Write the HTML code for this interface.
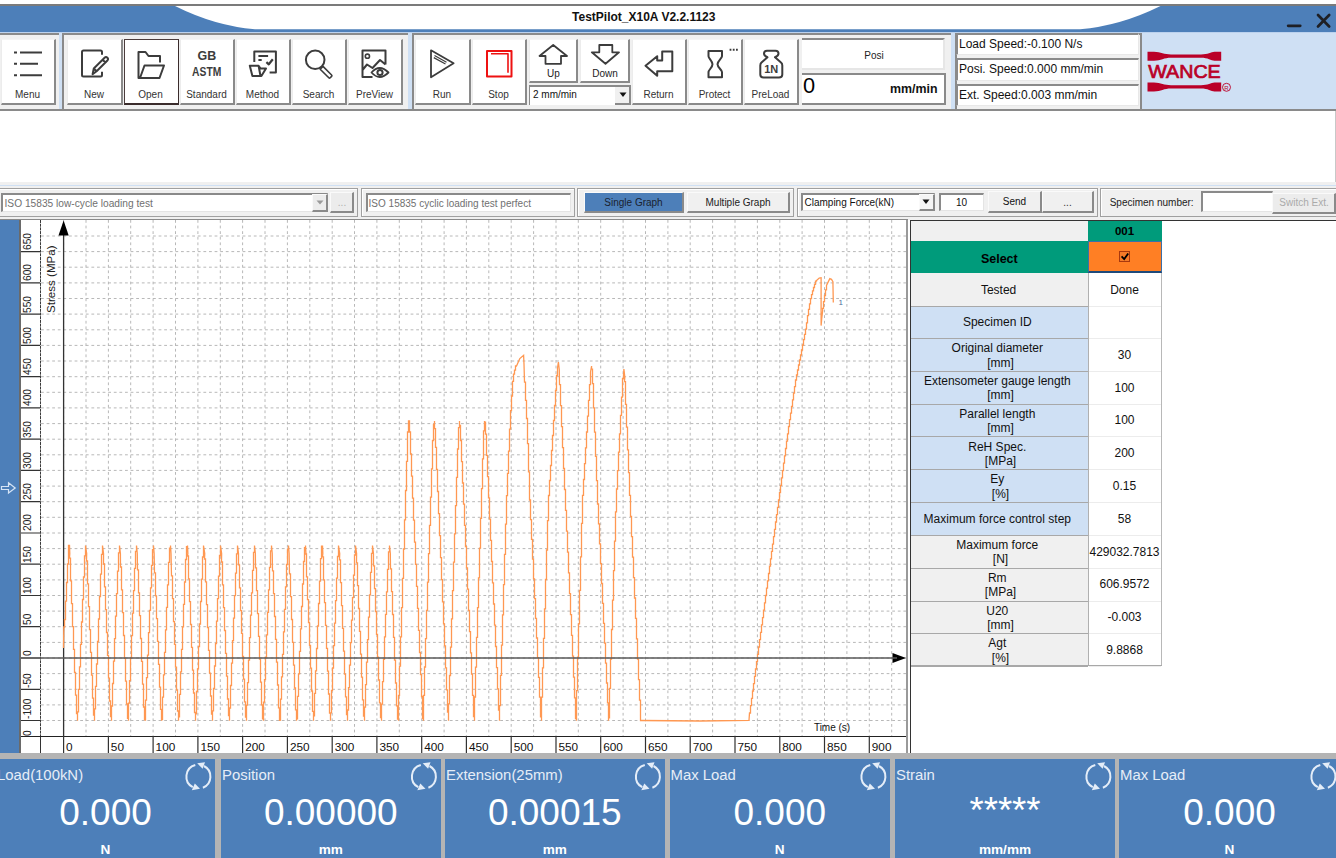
<!DOCTYPE html><html><head><meta charset="utf-8"><style>
html,body{margin:0;padding:0;}
body{width:1336px;height:858px;overflow:hidden;position:relative;background:#fff;font-family:"Liberation Sans", sans-serif;}
.t{position:absolute;white-space:nowrap;font-family:"Liberation Sans", sans-serif;}
.b{position:absolute;box-sizing:border-box;}
svg{position:absolute;left:0;top:0;}
</style></head><body>
<div class="b" style="left:0px;top:4px;width:1336px;height:2px;background:#7b7b7b;"></div>
<div class="b" style="left:0px;top:6px;width:1336px;height:26px;background:#4D7FB9;"></div>
<svg width="1336" height="40" style="left:0;top:0"><path d="M175,6 Q215,26 255,29.2 L1080,29.2 Q1120,26 1160.5,6 Z" fill="#fff"/></svg>
<div class="b" style="left:0px;top:32px;width:1336px;height:1px;background:#BcD2EE;"></div>
<div class="t" style="left:493.75px;width:300px;text-align:center;top:11.34px;font-size:12px;line-height:12px;font-weight:bold;color:#111;">TestPilot_X10A V2.2.1123</div>
<svg width="1336" height="40"><path d="M1288.2,25.8 H1300.2" stroke="#1e1f24" stroke-width="2.8" stroke-linecap="round"/></svg>
<svg width="1336" height="40" style="left:0;top:0"><path d="M1318,15 L1329.2,26.5 M1329.2,15 L1318,26.5" stroke="#1e1f24" stroke-width="2.7" stroke-linecap="round"/></svg>
<div class="b" style="left:0px;top:33px;width:1336px;height:76px;background:#CFE0F4;"></div>
<div class="b" style="left:0px;top:33px;width:59px;height:76px;background:#F0F0F0;border-top:2px solid #8A8A8A;"></div>
<div class="b" style="left:62px;top:33px;width:346px;height:76px;background:#F0F0F0;border-top:2px solid #8A8A8A;border-left:2px solid #8A8A8A;"></div>
<div class="b" style="left:412px;top:33px;width:539px;height:76px;background:#F0F0F0;border-top:2px solid #8A8A8A;border-left:2px solid #8A8A8A;"></div>
<div class="b" style="left:955px;top:33px;width:187px;height:76px;background:#F0F0F0;border-top:2px solid #8A8A8A;border-left:2px solid #8A8A8A;"></div>
<div class="b" style="left:0px;top:109px;width:1336px;height:2px;background:#8A8A8A;"></div>
<div class="b" style="left:1px;top:39px;width:55px;height:66px;background:#fff;border-right:2px solid #8A8A8A;border-bottom:2px solid #8A8A8A;border-left:1px solid #ececec;border-top:1px solid #f4f4f4;"></div>
<div class="t" style="left:-12.50px;width:80px;text-align:center;top:89.53px;font-size:10px;line-height:10px;font-weight:normal;color:#333;">Menu</div>
<div class="b" style="left:67px;top:39px;width:56px;height:66px;background:#fff;border-right:2px solid #8A8A8A;border-bottom:2px solid #8A8A8A;border-left:1px solid #ececec;border-top:1px solid #f4f4f4;"></div>
<div class="t" style="left:54.00px;width:80px;text-align:center;top:89.53px;font-size:10px;line-height:10px;font-weight:normal;color:#333;">New</div>
<div class="b" style="left:124px;top:39px;width:55px;height:66px;background:#fff;border:1px solid #4a3c3c;border-bottom:2px solid #3a2c2c;border-right:1px solid #3a2c2c;"></div>
<div class="t" style="left:110.50px;width:80px;text-align:center;top:89.53px;font-size:10px;line-height:10px;font-weight:normal;color:#333;">Open</div>
<div class="b" style="left:180px;top:39px;width:55px;height:66px;background:#fff;border-right:2px solid #8A8A8A;border-bottom:2px solid #8A8A8A;border-left:1px solid #ececec;border-top:1px solid #f4f4f4;"></div>
<div class="t" style="left:166.50px;width:80px;text-align:center;top:89.53px;font-size:10px;line-height:10px;font-weight:normal;color:#333;">Standard</div>
<div class="b" style="left:236px;top:39px;width:55px;height:66px;background:#fff;border-right:2px solid #8A8A8A;border-bottom:2px solid #8A8A8A;border-left:1px solid #ececec;border-top:1px solid #f4f4f4;"></div>
<div class="t" style="left:222.50px;width:80px;text-align:center;top:89.53px;font-size:10px;line-height:10px;font-weight:normal;color:#333;">Method</div>
<div class="b" style="left:292px;top:39px;width:55px;height:66px;background:#fff;border-right:2px solid #8A8A8A;border-bottom:2px solid #8A8A8A;border-left:1px solid #ececec;border-top:1px solid #f4f4f4;"></div>
<div class="t" style="left:278.50px;width:80px;text-align:center;top:89.53px;font-size:10px;line-height:10px;font-weight:normal;color:#333;">Search</div>
<div class="b" style="left:348px;top:39px;width:55px;height:66px;background:#fff;border-right:2px solid #8A8A8A;border-bottom:2px solid #8A8A8A;border-left:1px solid #ececec;border-top:1px solid #f4f4f4;"></div>
<div class="t" style="left:334.50px;width:80px;text-align:center;top:89.53px;font-size:10px;line-height:10px;font-weight:normal;color:#333;">PreView</div>
<div class="b" style="left:415px;top:39px;width:56px;height:66px;background:#fff;border-right:2px solid #8A8A8A;border-bottom:2px solid #8A8A8A;border-left:1px solid #ececec;border-top:1px solid #f4f4f4;"></div>
<div class="t" style="left:402.00px;width:80px;text-align:center;top:89.53px;font-size:10px;line-height:10px;font-weight:normal;color:#333;">Run</div>
<div class="b" style="left:472px;top:39px;width:55px;height:66px;background:#fff;border-right:2px solid #8A8A8A;border-bottom:2px solid #8A8A8A;border-left:1px solid #ececec;border-top:1px solid #f4f4f4;"></div>
<div class="t" style="left:458.50px;width:80px;text-align:center;top:89.53px;font-size:10px;line-height:10px;font-weight:normal;color:#333;">Stop</div>
<div class="b" style="left:632px;top:39px;width:55px;height:66px;background:#fff;border-right:2px solid #8A8A8A;border-bottom:2px solid #8A8A8A;border-left:1px solid #ececec;border-top:1px solid #f4f4f4;"></div>
<div class="t" style="left:618.50px;width:80px;text-align:center;top:89.53px;font-size:10px;line-height:10px;font-weight:normal;color:#333;">Return</div>
<div class="b" style="left:688px;top:39px;width:55px;height:66px;background:#fff;border-right:2px solid #8A8A8A;border-bottom:2px solid #8A8A8A;border-left:1px solid #ececec;border-top:1px solid #f4f4f4;"></div>
<div class="t" style="left:674.50px;width:80px;text-align:center;top:89.53px;font-size:10px;line-height:10px;font-weight:normal;color:#333;">Protect</div>
<div class="b" style="left:744px;top:39px;width:55px;height:66px;background:#fff;border-right:2px solid #8A8A8A;border-bottom:2px solid #8A8A8A;border-left:1px solid #ececec;border-top:1px solid #f4f4f4;"></div>
<div class="t" style="left:730.50px;width:80px;text-align:center;top:89.53px;font-size:10px;line-height:10px;font-weight:normal;color:#333;">PreLoad</div>
<div class="b" style="left:529px;top:39px;width:49px;height:44px;background:#fff;border-right:2px solid #8A8A8A;border-bottom:2px solid #8A8A8A;border-left:1px solid #ececec;border-top:1px solid #f4f4f4;"></div>
<div class="b" style="left:580px;top:39px;width:50px;height:44px;background:#fff;border-right:2px solid #8A8A8A;border-bottom:2px solid #8A8A8A;border-left:1px solid #ececec;border-top:1px solid #f4f4f4;"></div>
<div class="t" style="left:523.50px;width:60px;text-align:center;top:69.13px;font-size:10px;line-height:10px;font-weight:normal;color:#222;">Up</div>
<div class="t" style="left:575.00px;width:60px;text-align:center;top:69.13px;font-size:10px;line-height:10px;font-weight:normal;color:#222;">Down</div>
<div class="b" style="left:529px;top:85px;width:102px;height:20px;background:#fff;border-top:2px solid #8A8A8A;border-left:1px solid #8A8A8A;"></div>
<div class="b" style="left:615px;top:87px;width:16px;height:18px;background:#F0F0F0;border-right:2px solid #8A8A8A;border-bottom:2px solid #8A8A8A;"></div>
<svg width="1336" height="120"><path d="M619.5,92.5 L626.5,92.5 L623,97 Z" fill="#111"/></svg>
<div class="t" style="left:533.00px;top:90.13px;font-size:10px;line-height:10px;font-weight:normal;color:#111;">2 mm/min</div>
<div class="b" style="left:802px;top:38px;width:143px;height:32px;background:#fff;border-top:2px solid #8A8A8A;border-right:2px solid #e6e6e6;border-bottom:2px solid #e6e6e6;"></div>
<div class="t" style="left:834.00px;width:80px;text-align:center;top:50.53px;font-size:10px;line-height:10px;font-weight:normal;color:#222;">Posi</div>
<div class="b" style="left:802px;top:73px;width:144px;height:32px;background:#fff;border-top:2px solid #8A8A8A;border-right:2px solid #8A8A8A;border-bottom:2px solid #8A8A8A;"></div>
<div class="t" style="left:803.00px;top:74.95px;font-size:21.8px;line-height:21.8px;font-weight:normal;color:#000;">0</div>
<div class="t" style="left:837.50px;width:100px;text-align:right;top:83.30px;font-size:12.4px;line-height:12.4px;font-weight:bold;color:#111;">mm/min</div>
<div class="b" style="left:956px;top:33px;width:183px;height:22px;background:#fff;border-top:2px solid #8A8A8A;border-left:2px solid #8A8A8A;border-right:1px solid #e8e8e8;border-bottom:1px solid #e8e8e8;"></div>
<div class="t" style="left:959.00px;top:38.34px;font-size:12px;line-height:12px;font-weight:normal;color:#111;">Load Speed:-0.100 N/s</div>
<div class="b" style="left:956px;top:58px;width:183px;height:23px;background:#fff;border-top:2px solid #8A8A8A;border-left:2px solid #8A8A8A;border-right:1px solid #e8e8e8;border-bottom:1px solid #e8e8e8;"></div>
<div class="t" style="left:959.00px;top:63.34px;font-size:12px;line-height:12px;font-weight:normal;color:#111;">Posi. Speed:0.000 mm/min</div>
<div class="b" style="left:956px;top:84px;width:183px;height:22px;background:#fff;border-top:2px solid #8A8A8A;border-left:2px solid #8A8A8A;border-right:1px solid #e8e8e8;border-bottom:1px solid #e8e8e8;"></div>
<div class="t" style="left:959.00px;top:89.34px;font-size:12px;line-height:12px;font-weight:normal;color:#111;">Ext. Speed:0.003 mm/min</div>
<div class="b" style="left:1140px;top:33px;width:2px;height:76px;background:#8A8A8A;"></div>
<svg width="1336" height="120" style="left:0;top:0"><g fill="none" stroke="#3c3c3c" stroke-width="2" stroke-linecap="butt" stroke-linejoin="round"><path d="M14,52.5 H17 M20,52.5 H42 M14,63.8 H17 M20,63.8 H38 M14,75.2 H17 M20,75.2 H42"/><path d="M102,54.8 V52 Q102,50.5 100.5,50.5 H83.5 Q82,50.5 82,52 V75 Q82,76.5 83.5,76.5 H100.5 Q102,76.5 102,75 V71.8"/><path d="M92.6,74.2 L93.8,68.5 L104.6,57.7 Q106,56.3 107.4,57.7 Q108.8,59.1 107.4,60.5 L96.6,71.3 Z M102.6,59.7 L105.4,62.5 M93.8,68.5 L96.6,71.3"/><path d="M160,62.5 V56 H148.5 L145.5,52 H138.5 V78 H159.5 L164,65.5 H144.5 L140,78"/><path d="M254.3,62 V51.5 H275.9 V72.4 H269.6 M258.4,56 H268.1 M258.4,60.1 H261.7"/><path d="M266.4,62.2 L268.8,64.3 L272.8,59.3" stroke-width="2.2"/><path d="M249.8,65.8 H258.6 L260.4,68.4 H266 L261.4,76.1 H252.4 Z M258.6,65.8 L260.5,76" stroke-width="2"/><circle cx="315.2" cy="59.8" r="9.3"/><path d="M323,66.4 L331.6,75 Q332.3,75.7 331.6,76.4 L330.2,77.8 Q329.5,78.5 328.8,77.8 L320.2,69.2 Z" stroke-width="1.6"/><path d="M385.5,64.5 V50.5 H362.5 V77 H372.5 M362.5,70 L367,64.5 L372.5,68 L380,60 L385.5,64.5"/><circle cx="367.4" cy="56.2" r="2.1" stroke-width="1.6"/><path d="M371.5,72.5 Q379.5,63.5 388.5,72.5 Q379.5,81.5 371.5,72.5 Z" stroke-width="1.8"/><circle cx="380" cy="72.5" r="2.6" stroke-width="2"/><path d="M431,50.3 L453.6,63.3 L431,77.3 Z" stroke-width="1.8"/><path d="M434.5,55.6 L446.5,62.3 M433.8,57.6 L445.5,64" stroke-width="1.2"/><rect x="487" y="51" width="24.5" height="25.5" stroke="#ee1111" stroke-width="2"/><path d="M491,53.8 H508 V72.8" stroke="#ee1111" stroke-width="1.6"/><path d="M553.2,45 L539.5,56 H545.5 V63.8 H561 V56 H567 Z" stroke-width="1.8"/><path d="M599.3,45 H612.3 V52.3 H619 L605.5,63.8 L591.8,52.3 H599.3 Z" stroke-width="1.8"/><path d="M645.5,65.7 L657.2,56.2 V60.6 H662.2 V51.6 H672.3 V71.3 H657.2 V75.7 Z" stroke-width="2"/><path d="M708.5,51 H722 V56.3 C722,58.3 717.5,61 717.5,64.2 C717.5,67.4 722,70 722,72 V77.2 H708.5 V72 C708.5,70 712.5,67.4 712.5,64.2 C712.5,61 708.5,58.3 708.5,56.3 Z" stroke-width="2"/><path d="M729.6,49.8 H731.4 M732.8,49.8 H734.6 M736,49.8 H737.8" stroke-width="2"/><path d="M767.5,57.3 C765,56.3 764,55 764,53.5 C764,51.5 765.5,50.7 767,50.7 H775.5 C777,50.7 778.5,51.5 778.5,53.5 C778.5,55 777.5,56.3 775,57.3 L781,62.5 C782,63.3 782.3,64 782.3,65.5 V74.5 C782.3,76.5 781,77.5 779,77.5 H763.5 C761.5,77.5 760.3,76.5 760.3,74.5 V65.5 C760.3,64 760.6,63.3 761.5,62.5 Z" stroke-width="2"/></g><text x="771.2" y="73.1" font-family="Liberation Sans" font-weight="bold" font-size="11" fill="#3c3c3c" text-anchor="middle">1N</text><text x="206.8" y="60.1" font-family="Liberation Sans" font-weight="bold" font-size="12.4" fill="#3c3c3c" text-anchor="middle" textLength="18.7" lengthAdjust="spacingAndGlyphs">GB</text><text x="206.7" y="76.3" font-family="Liberation Sans" font-weight="bold" font-size="13" fill="#3c3c3c" text-anchor="middle" textLength="29.2" lengthAdjust="spacingAndGlyphs">ASTM</text></svg>
<svg width="1336" height="120" style="left:0;top:0"><path d="M1147.5,51.7 H1154 C1161,52.0 1164,54.400000000000006 1171,54.400000000000006 H1201 C1208,54.400000000000006 1211,52.0 1214.5,51.7 H1221.2 V60.7 H1214.5 C1211,60.400000000000006 1208,57.7 1201,57.7 H1171 C1164,57.7 1161,60.400000000000006 1154,60.7 H1147.5 Z" fill="#BA0028"/><path d="M1147.5,82.6 H1154 C1161,82.89999999999999 1164,85.3 1171,85.3 H1201 C1208,85.3 1211,82.89999999999999 1214.5,82.6 H1221.2 V91.6 H1214.5 C1211,91.3 1208,88.6 1201,88.6 H1171 C1164,88.6 1161,91.3 1154,91.6 H1147.5 Z" fill="#BA0028"/><text x="1184.5" y="77.9" font-family="Liberation Sans" font-weight="normal" font-size="18" fill="#BA0028" stroke="#BA0028" stroke-width="0.7" text-anchor="middle" textLength="72.5" lengthAdjust="spacingAndGlyphs">WANCE</text><circle cx="1226.5" cy="87.3" r="4" fill="none" stroke="#BA0028" stroke-width="0.9"/><text x="1226.5" y="89.6" font-family="Liberation Sans" font-size="6" fill="#BA0028" text-anchor="middle">R</text></svg>
<div class="b" style="left:0px;top:111px;width:1336px;height:71px;background:#fff;border-right:1px solid #c8c8c8;"></div>
<div class="b" style="left:0px;top:182px;width:1336px;height:38px;background:#F0F0F0;"></div>
<div class="b" style="left:0px;top:185px;width:1336px;height:1px;background:#CFE0F4;"></div>
<div class="b" style="left:-2px;top:188px;width:360px;height:29px;border:1px solid #a0a0a0;box-shadow:inset 1px 1px 0 #fff;"></div>
<div class="b" style="left:361px;top:188px;width:214px;height:29px;border:1px solid #a0a0a0;box-shadow:inset 1px 1px 0 #fff;"></div>
<div class="b" style="left:577px;top:188px;width:217px;height:29px;border:1px solid #a0a0a0;box-shadow:inset 1px 1px 0 #fff;"></div>
<div class="b" style="left:797px;top:188px;width:301px;height:29px;border:1px solid #a0a0a0;box-shadow:inset 1px 1px 0 #fff;"></div>
<div class="b" style="left:1100px;top:188px;width:237px;height:29px;border:1px solid #a0a0a0;box-shadow:inset 1px 1px 0 #fff;"></div>
<div class="b" style="left:1px;top:193px;width:327px;height:19px;background:#fff;border-top:2px solid #8A8A8A;border-left:2px solid #8A8A8A;border-right:1px solid #e4e4e4;border-bottom:1px solid #e4e4e4;"></div>
<div class="b" style="left:312px;top:194px;width:16px;height:18px;background:#ececec;border-top:1px solid #fafafa;border-left:1px solid #fafafa;border-right:2px solid #8A8A8A;border-bottom:2px solid #8A8A8A;"></div>
<svg width="1336" height="230"><path d="M316.5,200.5 L323.5,200.5 L320,204.5 Z" fill="#9a9a9a"/></svg>
<div class="t" style="left:4.50px;top:198.77px;font-size:10.2px;line-height:10.2px;font-weight:normal;color:#707070;">ISO 15835 low-cycle loading test</div>
<div class="b" style="left:330px;top:192px;width:24px;height:21px;background:#ececec;border-top:1px solid #fafafa;border-left:1px solid #fafafa;border-right:2px solid #8A8A8A;border-bottom:2px solid #8A8A8A;"></div>
<div class="t" style="left:327.00px;width:30px;text-align:center;top:197.53px;font-size:10px;line-height:10px;font-weight:normal;color:#b0b0b0;">...</div>
<div class="b" style="left:366px;top:193px;width:205px;height:19px;background:#fff;border-top:2px solid #8A8A8A;border-left:2px solid #8A8A8A;border-right:1px solid #e4e4e4;border-bottom:1px solid #e4e4e4;"></div>
<div class="t" style="left:368.60px;top:198.73px;font-size:10px;line-height:10px;font-weight:normal;color:#707070;">ISO 15835 cyclic loading test perfect</div>
<div class="b" style="left:584px;top:192px;width:100px;height:21px;background:#4D7FB9;border-top:1px solid #fafafa;border-left:1px solid #fafafa;border-right:2px solid #8A8A8A;border-bottom:2px solid #8A8A8A;"></div>
<div class="t" style="left:583.50px;width:100px;text-align:center;top:197.53px;font-size:10px;line-height:10px;font-weight:normal;color:#1a2230;">Single Graph</div>
<div class="b" style="left:687px;top:192px;width:103px;height:21px;background:#F0F0F0;border-top:1px solid #fafafa;border-left:1px solid #fafafa;border-right:2px solid #8A8A8A;border-bottom:2px solid #8A8A8A;"></div>
<div class="t" style="left:688.00px;width:100px;text-align:center;top:197.53px;font-size:10px;line-height:10px;font-weight:normal;color:#222;">Multiple Graph</div>
<div class="b" style="left:801px;top:193px;width:134px;height:18px;background:#fff;border-top:2px solid #8A8A8A;border-left:2px solid #8A8A8A;border-right:1px solid #e4e4e4;border-bottom:1px solid #e4e4e4;"></div>
<div class="t" style="left:804.50px;top:197.53px;font-size:10px;line-height:10px;font-weight:normal;color:#111;">Clamping Force(kN)</div>
<div class="b" style="left:919px;top:194px;width:16px;height:17px;background:#f4f4f4;border-top:1px solid #fafafa;border-left:1px solid #fafafa;border-right:2px solid #8A8A8A;border-bottom:2px solid #8A8A8A;"></div>
<svg width="1336" height="230"><path d="M922.5,199.5 L929.5,199.5 L926,204 Z" fill="#111"/></svg>
<div class="b" style="left:939px;top:193px;width:45px;height:18px;background:#fff;border-top:2px solid #8A8A8A;border-left:2px solid #8A8A8A;border-right:1px solid #e4e4e4;border-bottom:1px solid #e4e4e4;"></div>
<div class="t" style="left:941.50px;width:40px;text-align:center;top:197.53px;font-size:10px;line-height:10px;font-weight:normal;color:#111;">10</div>
<div class="b" style="left:988px;top:191px;width:54px;height:22px;background:#F0F0F0;border-top:1px solid #fafafa;border-left:1px solid #fafafa;border-right:2px solid #8A8A8A;border-bottom:2px solid #8A8A8A;"></div>
<div class="t" style="left:989.50px;width:50px;text-align:center;top:197.03px;font-size:10px;line-height:10px;font-weight:normal;color:#111;">Send</div>
<div class="b" style="left:1042px;top:191px;width:52px;height:22px;background:#F0F0F0;border-top:1px solid #fafafa;border-left:1px solid #fafafa;border-right:2px solid #8A8A8A;border-bottom:2px solid #8A8A8A;"></div>
<div class="t" style="left:1052.50px;width:30px;text-align:center;top:197.53px;font-size:10px;line-height:10px;font-weight:normal;color:#333;">...</div>
<div class="t" style="left:1109.70px;top:197.53px;font-size:10px;line-height:10px;font-weight:normal;color:#222;">Specimen number:</div>
<div class="b" style="left:1201px;top:191px;width:72px;height:21px;background:#fff;border-top:2px solid #8A8A8A;border-left:2px solid #8A8A8A;border-right:1px solid #e4e4e4;border-bottom:1px solid #e4e4e4;"></div>
<div class="b" style="left:1272px;top:193px;width:64px;height:21px;background:#ececec;border-top:1px solid #fafafa;border-left:1px solid #fafafa;border-right:2px solid #8A8A8A;border-bottom:2px solid #8A8A8A;"></div>
<div class="t" style="left:1269.00px;width:70px;text-align:center;top:198.03px;font-size:10px;line-height:10px;font-weight:normal;color:#aaaaaa;">Switch Ext.</div>
<div class="b" style="left:0px;top:220px;width:19px;height:533px;background:#4D7FB9;"></div>
<div class="b" style="left:19px;top:220px;width:2px;height:533px;background:#6a6a6a;"></div>
<div class="b" style="left:21px;top:220px;width:886px;height:533px;background:#fff;"></div>
<div class="b" style="left:906px;top:220px;width:2px;height:533px;background:#9a9a9a;"></div>
<div class="b" style="left:0px;top:219px;width:908px;height:1px;background:#8a8a8a;"></div>
<svg width="1336" height="858" style="left:0;top:0"><path d="M41,236.0 H906 M41,251.6 H906 M41,267.2 H906 M41,282.9 H906 M41,298.5 H906 M41,314.1 H906 M41,329.8 H906 M41,345.4 H906 M41,361.0 H906 M41,376.7 H906 M41,392.3 H906 M41,407.9 H906 M41,423.6 H906 M41,439.2 H906 M41,454.8 H906 M41,470.4 H906 M41,486.1 H906 M41,501.7 H906 M41,517.3 H906 M41,533.0 H906 M41,548.6 H906 M41,564.2 H906 M41,579.9 H906 M41,595.5 H906 M41,611.1 H906 M41,626.7 H906 M41,642.4 H906 M41,658.0 H906 M41,673.6 H906 M41,689.3 H906 M41,704.9 H906 M41,720.5 H906" stroke="#b8b8b8" stroke-width="1" stroke-dasharray="2.8,2.8" fill="none"/><path d="M63.6,220 V736 M86.0,220 V736 M108.4,220 V736 M130.7,220 V736 M153.1,220 V736 M175.5,220 V736 M197.9,220 V736 M220.3,220 V736 M242.6,220 V736 M265.0,220 V736 M287.4,220 V736 M309.8,220 V736 M332.2,220 V736 M354.5,220 V736 M376.9,220 V736 M399.3,220 V736 M421.7,220 V736 M444.1,220 V736 M466.4,220 V736 M488.8,220 V736 M511.2,220 V736 M533.6,220 V736 M556.0,220 V736 M578.3,220 V736 M600.7,220 V736 M623.1,220 V736 M645.5,220 V736 M667.9,220 V736 M690.2,220 V736 M712.6,220 V736 M735.0,220 V736 M757.4,220 V736 M779.8,220 V736 M802.1,220 V736 M824.5,220 V736 M846.9,220 V736 M869.3,220 V736 M891.7,220 V736" stroke="#b8b8b8" stroke-width="1" stroke-dasharray="2.8,2.8" fill="none"/><path d="M40.5,220 V736" stroke="#3a3a3a" stroke-width="1" stroke-dasharray="3,0.7"/><path d="M40.5,736 V753" stroke="#333" stroke-width="1"/><path d="M21,251.6 H40 M21,282.9 H40 M21,314.1 H40 M21,345.4 H40 M21,376.7 H40 M21,407.9 H40 M21,439.2 H40 M21,470.4 H40 M21,501.7 H40 M21,533.0 H40 M21,564.2 H40 M21,595.5 H40 M21,626.7 H40 M21,658.0 H40 M21,689.3 H40 M21,720.5 H40" stroke="#333" stroke-width="1.2"/><path d="M21,736.5 H906" stroke="#222" stroke-width="1.2"/><path d="M63.6,736 V753 M108.4,736 V753 M153.1,736 V753 M197.9,736 V753 M242.6,736 V753 M287.4,736 V753 M332.2,736 V753 M376.9,736 V753 M421.7,736 V753 M466.4,736 V753 M511.2,736 V753 M556.0,736 V753 M600.7,736 V753 M645.5,736 V753 M690.2,736 V753 M735.0,736 V753 M779.8,736 V753 M824.5,736 V753 M869.3,736 V753" stroke="#333" stroke-width="1.2"/><path d="M63.6,230 V736" stroke="#333" stroke-width="1.3"/><path d="M63.6,220.5 L58.5,235.5 L68.7,235.5 Z" fill="#000"/><path d="M906,658 L892.5,653 L892.5,663 Z" fill="#000"/><path d="M1.5,486.5 H8.5 V482.8 L15.2,488 L8.5,493 V489.5 H1.5 Z" fill="none" stroke="#d5e4f6" stroke-width="1.2"/><path d="M63.50,648.0 L63.80,627.0 L64.60,627.0 L64.50,619.6 L65.50,619.6 L65.50,601.1 L66.50,601.1 L66.50,582.5 L67.50,582.5 L67.50,564.0 L68.50,564.0 L68.50,545.5 L69.50,545.5 L69.50,545.5 L69.80,553.5 L69.50,558.1 L70.50,558.1 L70.50,580.9 L71.50,580.9 L71.50,603.7 L72.50,603.7 L72.50,626.6 L73.50,626.6 L73.50,649.4 L74.50,649.4 L74.50,672.3 L75.50,672.3 L75.50,695.1 L76.50,695.1 L76.50,708.8 L76.50,713.6 L77.50,713.6 L77.50,720.8 L77.50,711.8 L78.50,711.8 L78.50,689.4 L79.50,689.4 L79.50,666.9 L80.50,666.9 L80.50,644.4 L81.50,644.4 L81.50,622.0 L82.50,622.0 L82.50,599.5 L83.50,599.5 L83.50,577.0 L84.50,577.0 L84.50,557.5 L84.50,555.9 L85.50,555.9 L85.50,545.5 L86.67,553.5 L86.50,561.0 L87.50,561.0 L87.50,583.9 L88.50,583.9 L88.50,606.7 L89.50,606.7 L89.50,629.6 L90.50,629.6 L90.50,652.4 L91.50,652.4 L91.50,675.2 L92.50,675.2 L92.50,698.1 L93.50,698.1 L93.50,708.8 L93.50,715.2 L94.50,715.2 L94.50,720.8 L94.50,708.9 L95.50,708.9 L95.50,686.4 L96.50,686.4 L96.50,664.0 L97.50,664.0 L97.50,641.5 L98.50,641.5 L98.50,619.0 L99.50,619.0 L99.50,596.6 L100.50,596.6 L100.50,574.1 L101.50,574.1 L101.50,557.5 L101.50,554.4 L102.50,554.4 L102.50,545.5 L103.54,553.5 L103.50,564.0 L104.50,564.0 L104.50,586.8 L105.50,586.8 L105.50,609.7 L106.50,609.7 L106.50,632.5 L107.50,632.5 L107.50,655.4 L108.50,655.4 L108.50,678.2 L109.50,678.2 L109.50,701.0 L110.50,701.0 L110.50,708.8 L110.50,716.7 L111.50,716.7 L111.50,720.8 L111.50,706.0 L112.50,706.0 L112.50,683.5 L113.50,683.5 L113.50,661.1 L114.50,661.1 L114.50,638.6 L115.50,638.6 L115.50,616.1 L116.50,616.1 L116.50,593.7 L117.50,593.7 L117.50,571.2 L118.50,571.2 L118.50,557.5 L118.50,552.8 L119.50,552.8 L119.50,545.5 L120.41,553.5 L120.50,567.0 L121.50,567.0 L121.50,589.8 L122.50,589.8 L122.50,612.7 L123.50,612.7 L123.50,635.5 L124.50,635.5 L124.50,658.3 L125.50,658.3 L125.50,681.2 L126.50,681.2 L126.50,704.0 L127.50,704.0 L127.50,708.8 L127.50,718.3 L128.50,718.3 L128.50,720.8 L128.50,703.1 L129.50,703.1 L129.50,680.6 L130.50,680.6 L130.50,658.1 L131.50,658.1 L131.50,635.7 L132.50,635.7 L132.50,613.2 L133.50,613.2 L133.50,590.7 L134.50,590.7 L134.50,568.3 L135.50,568.3 L135.50,557.5 L135.50,551.3 L136.50,551.3 L136.50,545.5 L137.28,553.5 L137.50,569.9 L138.50,569.9 L138.50,592.8 L139.50,592.8 L139.50,615.6 L140.50,615.6 L140.50,638.5 L141.50,638.5 L141.50,661.3 L142.50,661.3 L142.50,684.1 L143.50,684.1 L143.50,707.0 L144.50,707.0 L144.50,708.8 L144.50,719.8 L145.50,719.8 L145.50,720.8 L145.50,700.1 L146.50,700.1 L146.50,677.7 L147.50,677.7 L147.50,655.2 L148.50,655.2 L148.50,632.7 L149.50,632.7 L149.50,610.3 L150.50,610.3 L150.50,587.8 L151.50,587.8 L151.50,565.4 L152.50,565.4 L152.50,557.5 L152.50,549.7 L153.50,549.7 L153.50,545.5 L154.15,553.5 L154.50,572.9 L155.50,572.9 L155.50,595.8 L156.50,595.8 L156.50,618.6 L157.50,618.6 L157.50,641.4 L158.50,641.4 L158.50,664.3 L159.50,664.3 L159.50,687.1 L160.50,687.1 L160.50,708.8 L160.50,709.4 L161.50,709.4 L161.50,720.8 L161.50,719.7 L162.50,719.7 L162.50,697.2 L163.50,697.2 L163.50,674.8 L164.50,674.8 L164.50,652.3 L165.50,652.3 L165.50,629.8 L166.50,629.8 L166.50,607.4 L167.50,607.4 L167.50,584.9 L168.50,584.9 L168.50,562.4 L169.50,562.4 L169.50,557.5 L169.50,548.1 L170.50,548.1 L170.50,545.5 L171.02,553.5 L171.50,575.9 L172.50,575.9 L172.50,598.7 L173.50,598.7 L173.50,621.6 L174.50,621.6 L174.50,644.4 L175.50,644.4 L175.50,667.2 L176.50,667.2 L176.50,690.1 L177.50,690.1 L177.50,708.8 L177.50,711.0 L178.50,711.0 L178.50,720.8 L178.50,716.8 L179.50,716.8 L179.50,694.3 L180.50,694.3 L180.50,671.8 L181.50,671.8 L181.50,649.4 L182.50,649.4 L182.50,626.9 L183.50,626.9 L183.50,604.4 L184.50,604.4 L184.50,582.0 L185.50,582.0 L185.50,559.5 L186.50,559.5 L186.50,557.5 L186.50,546.6 L187.50,546.6 L187.50,545.5 L187.89,553.5 L187.50,556.0 L188.50,556.0 L188.50,578.9 L189.50,578.9 L189.50,601.7 L190.50,601.7 L190.50,624.5 L191.50,624.5 L191.50,647.4 L192.50,647.4 L192.50,670.2 L193.50,670.2 L193.50,693.0 L194.50,693.0 L194.50,708.8 L194.50,712.5 L195.50,712.5 L195.50,720.8 L195.50,713.8 L196.50,713.8 L196.50,691.4 L197.50,691.4 L197.50,668.9 L198.50,668.9 L198.50,646.5 L199.50,646.5 L199.50,624.0 L200.50,624.0 L200.50,601.5 L201.50,601.5 L201.50,579.1 L202.50,579.1 L202.50,557.5 L202.50,557.0 L203.50,557.0 L203.50,545.5 L204.76,553.5 L204.50,559.0 L205.50,559.0 L205.50,581.8 L206.50,581.8 L206.50,604.7 L207.50,604.7 L207.50,627.5 L208.50,627.5 L208.50,650.3 L209.50,650.3 L209.50,673.2 L210.50,673.2 L210.50,696.0 L211.50,696.0 L211.50,708.8 L211.50,714.1 L212.50,714.1 L212.50,720.8 L212.50,710.9 L213.50,710.9 L213.50,688.5 L214.50,688.5 L214.50,666.0 L215.50,666.0 L215.50,643.5 L216.50,643.5 L216.50,621.1 L217.50,621.1 L217.50,598.6 L218.50,598.6 L218.50,576.1 L219.50,576.1 L219.50,557.5 L219.50,555.5 L220.50,555.5 L220.50,545.5 L221.63,553.5 L221.50,562.0 L222.50,562.0 L222.50,584.8 L223.50,584.8 L223.50,607.6 L224.50,607.6 L224.50,630.5 L225.50,630.5 L225.50,653.3 L226.50,653.3 L226.50,676.1 L227.50,676.1 L227.50,699.0 L228.50,699.0 L228.50,708.8 L228.50,715.6 L229.50,715.6 L229.50,720.8 L229.50,708.0 L230.50,708.0 L230.50,685.5 L231.50,685.5 L231.50,663.1 L232.50,663.1 L232.50,640.6 L233.50,640.6 L233.50,618.1 L234.50,618.1 L234.50,595.7 L235.50,595.7 L235.50,573.2 L236.50,573.2 L236.50,557.5 L236.50,553.9 L237.50,553.9 L237.50,545.5 L238.50,553.5 L238.50,564.9 L239.50,564.9 L239.50,587.8 L240.50,587.8 L240.50,610.6 L241.50,610.6 L241.50,633.4 L242.50,633.4 L242.50,656.3 L243.50,656.3 L243.50,679.1 L244.50,679.1 L244.50,701.9 L245.50,701.9 L245.50,708.8 L245.50,717.2 L246.50,717.2 L246.50,720.8 L246.50,705.1 L247.50,705.1 L247.50,682.6 L248.50,682.6 L248.50,660.2 L249.50,660.2 L249.50,637.7 L250.50,637.7 L250.50,615.2 L251.50,615.2 L251.50,592.8 L252.50,592.8 L252.50,570.3 L253.50,570.3 L253.50,557.5 L253.50,552.3 L254.50,552.3 L254.50,545.5 L255.37,553.5 L255.50,567.9 L256.50,567.9 L256.50,590.7 L257.50,590.7 L257.50,613.6 L258.50,613.6 L258.50,636.4 L259.50,636.4 L259.50,659.2 L260.50,659.2 L260.50,682.1 L261.50,682.1 L261.50,704.9 L262.50,704.9 L262.50,708.8 L262.50,718.8 L263.50,718.8 L263.50,720.8 L263.50,702.2 L264.50,702.2 L264.50,679.7 L265.50,679.7 L265.50,657.2 L266.50,657.2 L266.50,634.8 L267.50,634.8 L267.50,612.3 L268.50,612.3 L268.50,589.8 L269.50,589.8 L269.50,567.4 L270.50,567.4 L270.50,557.5 L270.50,550.8 L271.50,550.8 L271.50,545.5 L272.24,553.5 L272.50,570.9 L273.50,570.9 L273.50,593.7 L274.50,593.7 L274.50,616.5 L275.50,616.5 L275.50,639.4 L276.50,639.4 L276.50,662.2 L277.50,662.2 L277.50,685.0 L278.50,685.0 L278.50,707.9 L279.50,707.9 L279.50,708.8 L279.50,720.3 L280.50,720.3 L280.50,720.8 L280.50,699.2 L281.50,699.2 L281.50,676.8 L282.50,676.8 L282.50,654.3 L283.50,654.3 L283.50,631.8 L284.50,631.8 L284.50,609.4 L285.50,609.4 L285.50,586.9 L286.50,586.9 L286.50,564.5 L287.50,564.5 L287.50,557.5 L287.50,549.2 L288.50,549.2 L288.50,545.5 L289.11,553.5 L289.50,573.8 L290.50,573.8 L290.50,596.7 L291.50,596.7 L291.50,619.5 L292.50,619.5 L292.50,642.3 L293.50,642.3 L293.50,665.2 L294.50,665.2 L294.50,688.0 L295.50,688.0 L295.50,708.8 L295.50,709.9 L296.50,709.9 L296.50,720.8 L296.50,718.8 L297.50,718.8 L297.50,696.3 L298.50,696.3 L298.50,673.9 L299.50,673.9 L299.50,651.4 L300.50,651.4 L300.50,628.9 L301.50,628.9 L301.50,606.5 L302.50,606.5 L302.50,584.0 L303.50,584.0 L303.50,561.5 L304.50,561.5 L304.50,557.5 L304.50,547.7 L305.50,547.7 L305.50,545.5 L305.98,553.5 L305.50,554.0 L306.50,554.0 L306.50,576.8 L307.50,576.8 L307.50,599.6 L308.50,599.6 L308.50,622.5 L309.50,622.5 L309.50,645.3 L310.50,645.3 L310.50,668.1 L311.50,668.1 L311.50,691.0 L312.50,691.0 L312.50,708.8 L312.50,711.4 L313.50,711.4 L313.50,720.8 L313.50,715.9 L314.50,715.9 L314.50,693.4 L315.50,693.4 L315.50,670.9 L316.50,670.9 L316.50,648.5 L317.50,648.5 L317.50,626.0 L318.50,626.0 L318.50,603.5 L319.50,603.5 L319.50,581.1 L320.50,581.1 L320.50,558.6 L321.50,558.6 L321.50,557.5 L321.50,546.1 L322.50,546.1 L322.50,545.5 L322.85,553.5 L322.50,556.9 L323.50,556.9 L323.50,579.8 L324.50,579.8 L324.50,602.6 L325.50,602.6 L325.50,625.4 L326.50,625.4 L326.50,648.3 L327.50,648.3 L327.50,671.1 L328.50,671.1 L328.50,694.0 L329.50,694.0 L329.50,708.8 L329.50,713.0 L330.50,713.0 L330.50,720.8 L330.50,712.9 L331.50,712.9 L331.50,690.5 L332.50,690.5 L332.50,668.0 L333.50,668.0 L333.50,645.6 L334.50,645.6 L334.50,623.1 L335.50,623.1 L335.50,600.6 L336.50,600.6 L336.50,578.2 L337.50,578.2 L337.50,557.5 L337.50,556.5 L338.50,556.5 L338.50,545.5 L339.72,553.5 L339.50,559.9 L340.50,559.9 L340.50,582.7 L341.50,582.7 L341.50,605.6 L342.50,605.6 L342.50,628.4 L343.50,628.4 L343.50,651.2 L344.50,651.2 L344.50,674.1 L345.50,674.1 L345.50,696.9 L346.50,696.9 L346.50,708.8 L346.50,714.6 L347.50,714.6 L347.50,720.8 L347.50,710.0 L348.50,710.0 L348.50,687.6 L349.50,687.6 L349.50,665.1 L350.50,665.1 L350.50,642.6 L351.50,642.6 L351.50,620.2 L352.50,620.2 L352.50,597.7 L353.50,597.7 L353.50,575.2 L354.50,575.2 L354.50,557.5 L354.50,555.0 L355.50,555.0 L355.50,545.5 L356.59,553.5 L356.50,562.9 L357.50,562.9 L357.50,585.7 L358.50,585.7 L358.50,608.5 L359.50,608.5 L359.50,631.4 L360.50,631.4 L360.50,654.2 L361.50,654.2 L361.50,677.1 L362.50,677.1 L362.50,699.9 L363.50,699.9 L363.50,708.8 L363.50,716.1 L364.50,716.1 L364.50,720.8 L364.50,707.1 L365.50,707.1 L365.50,684.6 L366.50,684.6 L366.50,662.2 L367.50,662.2 L367.50,639.7 L368.50,639.7 L368.50,617.2 L369.50,617.2 L369.50,594.8 L370.50,594.8 L370.50,572.3 L371.50,572.3 L371.50,557.5 L371.50,553.4 L372.50,553.4 L372.50,545.5 L373.46,553.5 L373.50,565.8 L374.50,565.8 L374.50,588.7 L375.50,588.7 L375.50,611.5 L376.50,611.5 L376.50,634.3 L377.50,634.3 L377.50,657.2 L378.50,657.2 L378.50,680.0 L379.50,680.0 L379.50,702.9 L380.50,702.9 L380.50,708.8 L380.50,717.7 L381.50,717.7 L381.50,720.8 L381.50,704.2 L382.50,704.2 L382.50,681.7 L383.50,681.7 L383.50,659.3 L384.50,659.3 L384.50,636.8 L385.50,636.8 L385.50,614.3 L386.50,614.3 L386.50,591.9 L387.50,591.9 L387.50,569.4 L388.50,569.4 L388.50,557.5 L388.50,551.9 L389.50,551.9 L389.50,545.5 L390.33,553.5 L390.50,568.8 L391.50,568.8 L391.50,591.6 L392.50,591.6 L392.50,614.5 L393.50,614.5 L393.50,637.3 L394.50,637.3 L394.50,660.2 L395.50,660.2 L395.50,683.0 L396.50,683.0 L396.50,705.8 L397.50,705.8 L397.50,708.8 L397.50,719.2 L398.50,719.2 L398.50,720.8 L398.50,695.3 L399.50,695.3 L399.50,666.1 L400.50,666.1 L400.50,636.8 L401.50,636.8 L401.50,607.6 L402.50,607.6 L402.50,578.3 L403.50,578.3 L403.50,549.0 L404.50,549.0 L404.50,519.8 L405.50,519.8 L405.50,490.5 L406.50,490.5 L406.50,461.3 L407.50,461.3 L407.50,432.0 L408.50,432.0 L408.50,432.0 L408.50,421.0 L409.50,421.0 L409.50,421.0 L409.50,432.0 L410.50,432.0 L410.50,432.0 L410.50,454.0 L411.50,454.0 L411.50,476.1 L412.50,476.1 L412.50,498.1 L413.50,498.1 L413.50,520.2 L414.50,520.2 L414.50,542.2 L415.50,542.2 L415.50,564.3 L416.50,564.3 L416.50,586.3 L417.50,586.3 L417.50,608.4 L418.50,608.4 L418.50,630.4 L419.50,630.4 L419.50,652.5 L420.50,652.5 L420.50,674.5 L421.50,674.5 L421.50,696.5 L422.50,696.5 L422.50,718.6 L423.50,718.6 L423.50,720.8 L423.50,695.3 L424.50,695.3 L424.50,667.0 L425.50,667.0 L425.50,638.7 L426.50,638.7 L426.50,610.4 L427.50,610.4 L427.50,582.1 L428.50,582.1 L428.50,553.7 L429.50,553.7 L429.50,525.4 L430.50,525.4 L430.50,497.1 L431.50,497.1 L431.50,468.8 L432.50,468.8 L432.50,440.5 L433.50,440.5 L433.50,432.0 L433.50,424.3 L434.50,424.3 L434.50,421.0 L434.50,428.7 L435.50,428.7 L435.50,432.0 L435.50,447.4 L436.50,447.4 L436.50,469.5 L437.50,469.5 L437.50,491.5 L438.50,491.5 L438.50,513.6 L439.50,513.6 L439.50,535.6 L440.50,535.6 L440.50,557.7 L441.50,557.7 L441.50,579.7 L442.50,579.7 L442.50,601.8 L443.50,601.8 L443.50,623.8 L444.50,623.8 L444.50,645.8 L445.50,645.8 L445.50,667.9 L446.50,667.9 L446.50,689.9 L447.50,689.9 L447.50,712.0 L448.50,712.0 L448.50,720.8 L448.50,703.8 L449.50,703.8 L449.50,675.5 L450.50,675.5 L450.50,647.2 L451.50,647.2 L451.50,618.9 L452.50,618.9 L452.50,590.6 L453.50,590.6 L453.50,562.2 L454.50,562.2 L454.50,533.9 L455.50,533.9 L455.50,505.6 L456.50,505.6 L456.50,477.3 L457.50,477.3 L457.50,449.0 L458.50,449.0 L458.50,432.0 L458.50,427.6 L459.50,427.6 L459.50,421.0 L459.50,425.4 L460.50,425.4 L460.50,432.0 L460.50,440.5 L461.50,440.5 L461.50,461.7 L462.50,461.7 L462.50,483.0 L463.50,483.0 L463.50,504.2 L464.50,504.2 L464.50,525.4 L465.50,525.4 L465.50,546.7 L466.50,546.7 L466.50,567.9 L467.50,567.9 L467.50,589.1 L468.50,589.1 L468.50,610.4 L469.50,610.4 L469.50,631.6 L470.50,631.6 L470.50,652.8 L471.50,652.8 L471.50,674.1 L472.50,674.1 L472.50,695.3 L473.50,695.3 L473.50,716.6 L474.50,716.6 L474.50,720.8 L474.50,697.0 L475.50,697.0 L475.50,667.2 L476.50,667.2 L476.50,637.4 L477.50,637.4 L477.50,607.7 L478.50,607.7 L478.50,577.9 L479.50,577.9 L479.50,548.1 L480.50,548.1 L480.50,518.3 L481.50,518.3 L481.50,488.6 L482.50,488.6 L482.50,458.8 L483.50,458.8 L483.50,432.0 L483.50,430.9 L484.50,430.9 L484.50,421.0 L484.50,422.1 L485.50,422.1 L485.50,432.0 L485.50,434.1 L486.50,434.1 L486.50,455.4 L487.50,455.4 L487.50,476.6 L488.50,476.6 L488.50,497.8 L489.50,497.8 L489.50,519.1 L490.50,519.1 L490.50,540.3 L491.50,540.3 L491.50,561.5 L492.50,561.5 L492.50,582.8 L493.50,582.8 L493.50,604.0 L494.50,604.0 L494.50,625.2 L495.50,625.2 L495.50,646.5 L496.50,646.5 L496.50,667.7 L497.50,667.7 L497.50,688.9 L498.50,688.9 L498.50,710.2 L499.50,710.2 L499.50,720.8 L499.50,705.7 L500.50,705.7 L500.50,675.4 L501.50,675.4 L501.50,645.2 L502.50,645.2 L502.50,614.9 L503.50,614.9 L503.50,584.7 L504.50,584.7 L504.50,554.4 L505.50,554.4 L505.50,524.2 L506.50,524.2 L506.50,500.0 L506.50,495.6 L507.50,495.6 L507.50,473.4 L508.50,473.4 L508.50,451.2 L509.50,451.2 L509.50,429.1 L510.50,429.1 L510.50,418.0 L510.50,410.7 L511.50,410.7 L511.50,396.0 L512.50,396.0 L512.50,381.4 L513.50,381.4 L513.50,377.0 L513.50,374.1 L514.50,374.1 L514.50,370.1 L515.50,370.1 L515.50,366.0 L516.50,366.0 L516.50,366.0 L519.80,358.6 L523.60,355.3 L524.00,364.0 L524.50,382.2 L525.50,382.2 L525.50,400.4 L526.50,400.4 L526.50,418.5 L527.50,418.5 L527.50,424.0 L527.50,443.7 L528.50,443.7 L528.50,471.9 L529.50,471.9 L529.50,500.0 L530.50,500.0 L530.50,500.0 L530.50,519.7 L531.50,519.7 L531.50,539.4 L532.50,539.4 L532.50,559.1 L533.50,559.1 L533.50,578.9 L534.50,578.9 L534.50,598.6 L535.50,598.6 L535.50,618.3 L536.50,618.3 L536.50,638.0 L537.50,638.0 L537.50,657.7 L538.50,657.7 L538.50,677.4 L539.50,677.4 L539.50,697.1 L540.50,697.1 L540.50,716.9 L541.50,716.9 L541.50,720.8 L541.50,697.2 L542.50,697.2 L542.50,667.8 L543.50,667.8 L543.50,638.4 L544.50,638.4 L544.50,608.9 L545.50,608.9 L545.50,579.5 L546.50,579.5 L546.50,550.0 L547.50,550.0 L547.50,520.6 L548.50,520.6 L548.50,500.0 L548.50,495.5 L549.50,495.5 L549.50,480.5 L550.50,480.5 L550.50,465.5 L551.50,465.5 L551.50,450.5 L552.50,450.5 L552.50,435.5 L553.50,435.5 L553.50,420.5 L554.50,420.5 L554.50,405.5 L555.50,405.5 L555.50,390.5 L556.50,390.5 L556.50,375.5 L557.50,375.5 L557.50,368.0 L558.40,362.0 L559.30,370.0 L559.50,384.7 L560.50,384.7 L560.50,405.6 L561.50,405.6 L561.50,426.6 L562.50,426.6 L562.50,447.6 L563.50,447.6 L563.50,468.5 L564.50,468.5 L564.50,489.5 L565.50,489.5 L565.50,500.0 L565.50,510.4 L566.50,510.4 L566.50,531.2 L567.50,531.2 L567.50,552.1 L568.50,552.1 L568.50,572.9 L569.50,572.9 L569.50,593.7 L570.50,593.7 L570.50,614.6 L571.50,614.6 L571.50,635.4 L572.50,635.4 L572.50,656.2 L573.50,656.2 L573.50,677.1 L574.50,677.1 L574.50,697.9 L575.50,697.9 L575.50,718.7 L576.50,718.7 L576.50,720.8 L576.50,690.7 L577.50,690.7 L577.50,657.2 L578.50,657.2 L578.50,623.8 L579.50,623.8 L579.50,590.3 L580.50,590.3 L580.50,556.9 L581.50,556.9 L581.50,523.4 L582.50,523.4 L582.50,500.0 L582.50,495.3 L583.50,495.3 L583.50,479.5 L584.50,479.5 L584.50,463.7 L585.50,463.7 L585.50,447.9 L586.50,447.9 L586.50,432.0 L587.50,432.0 L587.50,416.2 L588.50,416.2 L588.50,400.4 L589.50,400.4 L589.50,384.6 L590.50,384.6 L590.50,372.0 L591.60,366.0 L591.50,369.2 L592.50,369.2 L592.50,374.0 L592.50,383.7 L593.50,383.7 L593.50,407.9 L594.50,407.9 L594.50,432.2 L595.50,432.2 L595.50,456.4 L596.50,456.4 L596.50,480.6 L597.50,480.6 L597.50,500.0 L597.50,504.0 L598.50,504.0 L598.50,523.9 L599.50,523.9 L599.50,543.8 L600.50,543.8 L600.50,563.7 L601.50,563.7 L601.50,583.5 L602.50,583.5 L602.50,603.4 L603.50,603.4 L603.50,623.3 L604.50,623.3 L604.50,643.2 L605.50,643.2 L605.50,663.1 L606.50,663.1 L606.50,683.0 L607.50,683.0 L607.50,702.9 L608.50,702.9 L608.50,720.8 L608.50,717.9 L609.50,717.9 L609.50,688.4 L610.50,688.4 L610.50,659.0 L611.50,659.0 L611.50,629.5 L612.50,629.5 L612.50,600.1 L613.50,600.1 L613.50,570.7 L614.50,570.7 L614.50,541.2 L615.50,541.2 L615.50,511.8 L616.50,511.8 L616.50,500.0 L616.50,489.0 L617.50,489.0 L617.50,470.6 L618.50,470.6 L618.50,452.2 L619.50,452.2 L619.50,433.8 L620.50,433.8 L620.50,415.4 L621.50,415.4 L621.50,397.1 L622.50,397.1 L622.50,378.7 L623.50,378.7 L623.50,375.0 L623.90,369.0 L624.80,377.0 L624.50,381.6 L625.50,381.6 L625.50,404.3 L626.50,404.3 L626.50,427.1 L627.50,427.1 L627.50,449.9 L628.50,449.9 L628.50,472.7 L629.50,472.7 L629.50,495.4 L630.50,495.4 L630.50,500.0 L630.50,516.3 L631.50,516.3 L631.50,536.7 L632.50,536.7 L632.50,557.2 L633.50,557.2 L633.50,577.6 L634.50,577.6 L634.50,598.0 L635.50,598.0 L635.50,618.4 L636.50,618.4 L636.50,638.8 L637.50,638.8 L637.50,659.2 L638.50,659.2 L638.50,679.7 L639.50,679.7 L639.50,700.1 L640.50,700.1 L640.50,720.5 L641.50,720.5 L641.50,720.5 L700.00,721.0 L749.00,720.3 L749.50,713.0 L750.50,713.0 L750.50,705.6 L751.50,705.6 L751.50,698.3 L752.50,698.3 L752.50,691.0 L753.50,691.0 L753.50,683.7 L754.50,683.7 L754.50,676.3 L755.50,676.3 L755.50,669.0 L756.50,669.0 L756.50,661.7 L757.50,661.7 L757.50,658.0 L757.50,654.3 L758.50,654.3 L758.50,647.0 L759.50,647.0 L759.50,639.6 L760.50,639.6 L760.50,632.3 L761.50,632.3 L761.50,624.9 L762.50,624.9 L762.50,617.6 L763.50,617.6 L763.50,610.2 L764.50,610.2 L764.50,602.9 L765.50,602.9 L765.50,595.5 L766.50,595.5 L766.50,588.2 L767.50,588.2 L767.50,580.8 L768.50,580.8 L768.50,573.5 L769.50,573.5 L769.50,566.1 L770.50,566.1 L770.50,558.8 L771.50,558.8 L771.50,551.4 L772.50,551.4 L772.50,544.8 L772.50,544.1 L773.50,544.1 L773.50,536.7 L774.50,536.7 L774.50,529.4 L775.50,529.4 L775.50,522.0 L776.50,522.0 L776.50,514.7 L777.50,514.7 L777.50,507.3 L778.50,507.3 L778.50,500.0 L779.50,500.0 L779.50,492.6 L780.50,492.6 L780.50,485.3 L781.50,485.3 L781.50,477.9 L782.50,477.9 L782.50,470.6 L783.50,470.6 L783.50,463.2 L784.50,463.2 L784.50,455.9 L785.50,455.9 L785.50,448.5 L786.50,448.5 L786.50,441.2 L787.50,441.2 L787.50,433.9 L788.50,433.9 L788.50,426.5 L789.50,426.5 L789.50,424.3 L789.50,419.7 L790.50,419.7 L790.50,413.1 L791.50,413.1 L791.50,406.4 L792.50,406.4 L792.50,399.8 L793.50,399.8 L793.50,393.2 L794.50,393.2 L794.50,386.6 L795.50,386.6 L795.50,380.0 L796.50,380.0 L796.50,380.0 L796.50,375.0 L797.50,375.0 L797.50,370.0 L798.50,370.0 L798.50,365.0 L799.50,365.0 L799.50,360.0 L800.50,360.0 L800.50,355.0 L801.50,355.0 L801.50,350.0 L802.50,350.0 L802.50,345.0 L803.50,345.0 L803.50,345.0 L803.50,339.7 L804.50,339.7 L804.50,334.4 L805.50,334.4 L805.50,329.1 L806.50,329.1 L806.50,327.0 L806.50,322.8 L807.50,322.8 L807.50,315.7 L808.50,315.7 L808.50,311.5 L808.50,309.3 L809.50,309.3 L809.50,303.9 L810.50,303.9 L810.50,299.0 L810.50,298.6 L811.50,298.6 L811.50,294.7 L812.50,294.7 L812.50,290.8 L813.50,290.8 L813.50,290.0 L813.50,287.5 L814.50,287.5 L814.50,284.4 L815.50,284.4 L815.50,281.2 L816.50,281.2 L816.50,280.6 L819.20,278.0 L821.10,277.7 L821.10,325.6 L821.80,318.0 L822.70,310.4 L822.50,308.4 L823.50,308.4 L823.50,301.7 L824.50,301.7 L824.50,298.3 L824.50,295.5 L825.50,295.5 L825.50,289.9 L826.50,289.9 L826.50,285.4 L829.80,278.6 L831.50,279.3 L832.90,281.6 L833.30,302.5" stroke="#FF9852" stroke-width="1.3" fill="none" stroke-linejoin="miter"/><path d="M21,658 H897" stroke="#5a5a5a" stroke-width="1.4"/></svg>
<div class="t" style="left:23.0px;top:250.02px;font-size:10.2px;line-height:10.2px;color:#222;transform-origin:0 0;transform:rotate(-90deg);">650</div>
<div class="t" style="left:23.0px;top:281.28px;font-size:10.2px;line-height:10.2px;color:#222;transform-origin:0 0;transform:rotate(-90deg);">600</div>
<div class="t" style="left:23.0px;top:312.53999999999996px;font-size:10.2px;line-height:10.2px;color:#222;transform-origin:0 0;transform:rotate(-90deg);">550</div>
<div class="t" style="left:23.0px;top:343.8px;font-size:10.2px;line-height:10.2px;color:#222;transform-origin:0 0;transform:rotate(-90deg);">500</div>
<div class="t" style="left:23.0px;top:375.06px;font-size:10.2px;line-height:10.2px;color:#222;transform-origin:0 0;transform:rotate(-90deg);">450</div>
<div class="t" style="left:23.0px;top:406.32px;font-size:10.2px;line-height:10.2px;color:#222;transform-origin:0 0;transform:rotate(-90deg);">400</div>
<div class="t" style="left:23.0px;top:437.58px;font-size:10.2px;line-height:10.2px;color:#222;transform-origin:0 0;transform:rotate(-90deg);">350</div>
<div class="t" style="left:23.0px;top:468.84px;font-size:10.2px;line-height:10.2px;color:#222;transform-origin:0 0;transform:rotate(-90deg);">300</div>
<div class="t" style="left:23.0px;top:500.1px;font-size:10.2px;line-height:10.2px;color:#222;transform-origin:0 0;transform:rotate(-90deg);">250</div>
<div class="t" style="left:23.0px;top:531.36px;font-size:10.2px;line-height:10.2px;color:#222;transform-origin:0 0;transform:rotate(-90deg);">200</div>
<div class="t" style="left:23.0px;top:562.62px;font-size:10.2px;line-height:10.2px;color:#222;transform-origin:0 0;transform:rotate(-90deg);">150</div>
<div class="t" style="left:23.0px;top:593.88px;font-size:10.2px;line-height:10.2px;color:#222;transform-origin:0 0;transform:rotate(-90deg);">100</div>
<div class="t" style="left:23.0px;top:625.14px;font-size:10.2px;line-height:10.2px;color:#222;transform-origin:0 0;transform:rotate(-90deg);">50</div>
<div class="t" style="left:23.0px;top:656.4px;font-size:10.2px;line-height:10.2px;color:#222;transform-origin:0 0;transform:rotate(-90deg);">0</div>
<div class="t" style="left:23.0px;top:687.66px;font-size:10.2px;line-height:10.2px;color:#222;transform-origin:0 0;transform:rotate(-90deg);">-50</div>
<div class="t" style="left:23.0px;top:718.92px;font-size:10.2px;line-height:10.2px;color:#222;transform-origin:0 0;transform:rotate(-90deg);">-100</div>
<div class="t" style="left:23.0px;top:735.5px;font-size:10.2px;line-height:10.2px;color:#222;transform-origin:0 0;transform:rotate(-90deg);">0</div>
<div class="t" style="left:45px;top:313.4px;font-size:11.6px;line-height:11.6px;color:#222;transform-origin:0 0;transform:rotate(-90deg);">Stress (MPa)</div>
<div class="t" style="left:66.10px;top:742.21px;font-size:11.8px;line-height:11.8px;font-weight:normal;color:#111;">0</div>
<div class="t" style="left:110.86px;top:742.21px;font-size:11.8px;line-height:11.8px;font-weight:normal;color:#111;">50</div>
<div class="t" style="left:155.62px;top:742.21px;font-size:11.8px;line-height:11.8px;font-weight:normal;color:#111;">100</div>
<div class="t" style="left:200.38px;top:742.21px;font-size:11.8px;line-height:11.8px;font-weight:normal;color:#111;">150</div>
<div class="t" style="left:245.14px;top:742.21px;font-size:11.8px;line-height:11.8px;font-weight:normal;color:#111;">200</div>
<div class="t" style="left:289.90px;top:742.21px;font-size:11.8px;line-height:11.8px;font-weight:normal;color:#111;">250</div>
<div class="t" style="left:334.66px;top:742.21px;font-size:11.8px;line-height:11.8px;font-weight:normal;color:#111;">300</div>
<div class="t" style="left:379.42px;top:742.21px;font-size:11.8px;line-height:11.8px;font-weight:normal;color:#111;">350</div>
<div class="t" style="left:424.18px;top:742.21px;font-size:11.8px;line-height:11.8px;font-weight:normal;color:#111;">400</div>
<div class="t" style="left:468.94px;top:742.21px;font-size:11.8px;line-height:11.8px;font-weight:normal;color:#111;">450</div>
<div class="t" style="left:513.70px;top:742.21px;font-size:11.8px;line-height:11.8px;font-weight:normal;color:#111;">500</div>
<div class="t" style="left:558.46px;top:742.21px;font-size:11.8px;line-height:11.8px;font-weight:normal;color:#111;">550</div>
<div class="t" style="left:603.22px;top:742.21px;font-size:11.8px;line-height:11.8px;font-weight:normal;color:#111;">600</div>
<div class="t" style="left:647.98px;top:742.21px;font-size:11.8px;line-height:11.8px;font-weight:normal;color:#111;">650</div>
<div class="t" style="left:692.74px;top:742.21px;font-size:11.8px;line-height:11.8px;font-weight:normal;color:#111;">700</div>
<div class="t" style="left:737.50px;top:742.21px;font-size:11.8px;line-height:11.8px;font-weight:normal;color:#111;">750</div>
<div class="t" style="left:782.26px;top:742.21px;font-size:11.8px;line-height:11.8px;font-weight:normal;color:#111;">800</div>
<div class="t" style="left:827.02px;top:742.21px;font-size:11.8px;line-height:11.8px;font-weight:normal;color:#111;">850</div>
<div class="t" style="left:871.78px;top:742.21px;font-size:11.8px;line-height:11.8px;font-weight:normal;color:#111;">900</div>
<div class="t" style="left:813.90px;top:722.53px;font-size:10px;line-height:10px;font-weight:normal;color:#111;">Time (s)</div>
<div class="t" style="left:838.60px;top:299.43px;font-size:8px;line-height:8px;font-weight:normal;color:#4a6a9a;">1</div>
<div class="b" style="left:910px;top:220px;width:426px;height:534px;background:#fff;border-left:1px solid #333;border-top:1px solid #333;border-bottom:1px solid #333;"></div>
<div class="b" style="left:911px;top:221px;width:177px;height:20px;background:#F0F0F0;"></div>
<div class="b" style="left:1088px;top:221px;width:74px;height:20px;background:#009B7B;"></div>
<div class="t" style="left:1094.50px;width:60px;text-align:center;top:226.27px;font-size:11.5px;line-height:11.5px;font-weight:bold;color:#000;">001</div>
<div class="b" style="left:911px;top:241px;width:177px;height:32px;background:#009B7B;"></div>
<div class="b" style="left:1088px;top:241px;width:74px;height:32px;background:#FF7F24;border:1px solid #3d6fa8;border-bottom:2px solid #1f4a7a;"></div>
<div class="t" style="left:919.30px;width:160px;text-align:center;top:252.72px;font-size:12.5px;line-height:12.5px;font-weight:bold;color:#000;">Select</div>
<div class="b" style="left:1119px;top:251px;width:11px;height:11px;border:1.6px solid #a8380e;background:#f47a28;"></div>
<svg width="1336" height="858"><path d="M1121.6,256.4 L1124.2,259.1 L1128.2,253.5" stroke="#000" stroke-width="1.8" fill="none"/></svg>
<div class="b" style="left:911px;top:273px;width:177px;height:33px;background:#F0F0F0;"></div>
<div class="b" style="left:1088px;top:273px;width:74px;height:33px;background:#fff;border-left:1px solid #b0b0b0;border-right:1px solid #b8b8b8;"></div>
<div class="b" style="left:911px;top:306px;width:177px;height:1px;background:#a8a8a8;z-index:2;"></div>
<div class="b" style="left:1089px;top:306px;width:72px;height:1px;background:#ececec;z-index:2;"></div>
<div class="t" style="left:910.60px;width:176px;text-align:center;top:283.64px;font-size:12px;line-height:12px;font-weight:normal;color:#111;">Tested</div>
<div class="t" style="left:1087.50px;width:74px;text-align:center;top:283.64px;font-size:12px;line-height:12px;font-weight:normal;color:#111;">Done</div>
<div class="b" style="left:911px;top:306px;width:177px;height:32px;background:#CFE0F4;"></div>
<div class="b" style="left:1088px;top:306px;width:74px;height:32px;background:#fff;border-left:1px solid #b0b0b0;border-right:1px solid #b8b8b8;"></div>
<div class="b" style="left:911px;top:338px;width:177px;height:1px;background:#a8a8a8;z-index:2;"></div>
<div class="b" style="left:1089px;top:338px;width:72px;height:1px;background:#ececec;z-index:2;"></div>
<div class="t" style="left:909.30px;width:176px;text-align:center;top:316.24px;font-size:12px;line-height:12px;font-weight:normal;color:#111;">Specimen ID</div>
<div class="b" style="left:911px;top:338px;width:177px;height:33px;background:#CFE0F4;"></div>
<div class="b" style="left:1088px;top:338px;width:74px;height:33px;background:#fff;border-left:1px solid #b0b0b0;border-right:1px solid #b8b8b8;"></div>
<div class="b" style="left:911px;top:371px;width:177px;height:1px;background:#a8a8a8;z-index:2;"></div>
<div class="b" style="left:1089px;top:371px;width:72px;height:1px;background:#ececec;z-index:2;"></div>
<div class="t" style="left:909.30px;width:176px;text-align:center;top:342.24px;font-size:12px;line-height:12px;font-weight:normal;color:#111;">Original diameter</div>
<div class="t" style="left:912.50px;width:176px;text-align:center;top:356.74px;font-size:12px;line-height:12px;font-weight:normal;color:#111;">[mm]</div>
<div class="t" style="left:1087.50px;width:74px;text-align:center;top:348.94px;font-size:12px;line-height:12px;font-weight:normal;color:#111;">30</div>
<div class="b" style="left:911px;top:371px;width:177px;height:33px;background:#CFE0F4;"></div>
<div class="b" style="left:1088px;top:371px;width:74px;height:33px;background:#fff;border-left:1px solid #b0b0b0;border-right:1px solid #b8b8b8;"></div>
<div class="b" style="left:911px;top:404px;width:177px;height:1px;background:#a8a8a8;z-index:2;"></div>
<div class="b" style="left:1089px;top:404px;width:72px;height:1px;background:#ececec;z-index:2;"></div>
<div class="t" style="left:909.30px;width:176px;text-align:center;top:374.94px;font-size:12px;line-height:12px;font-weight:normal;color:#111;">Extensometer gauge length</div>
<div class="t" style="left:912.50px;width:176px;text-align:center;top:389.44px;font-size:12px;line-height:12px;font-weight:normal;color:#111;">[mm]</div>
<div class="t" style="left:1087.50px;width:74px;text-align:center;top:381.64px;font-size:12px;line-height:12px;font-weight:normal;color:#111;">100</div>
<div class="b" style="left:911px;top:404px;width:177px;height:32px;background:#CFE0F4;"></div>
<div class="b" style="left:1088px;top:404px;width:74px;height:32px;background:#fff;border-left:1px solid #b0b0b0;border-right:1px solid #b8b8b8;"></div>
<div class="b" style="left:911px;top:436px;width:177px;height:1px;background:#a8a8a8;z-index:2;"></div>
<div class="b" style="left:1089px;top:436px;width:72px;height:1px;background:#ececec;z-index:2;"></div>
<div class="t" style="left:909.30px;width:176px;text-align:center;top:407.64px;font-size:12px;line-height:12px;font-weight:normal;color:#111;">Parallel length</div>
<div class="t" style="left:912.50px;width:176px;text-align:center;top:422.14px;font-size:12px;line-height:12px;font-weight:normal;color:#111;">[mm]</div>
<div class="t" style="left:1087.50px;width:74px;text-align:center;top:414.34px;font-size:12px;line-height:12px;font-weight:normal;color:#111;">100</div>
<div class="b" style="left:911px;top:436px;width:177px;height:33px;background:#CFE0F4;"></div>
<div class="b" style="left:1088px;top:436px;width:74px;height:33px;background:#fff;border-left:1px solid #b0b0b0;border-right:1px solid #b8b8b8;"></div>
<div class="b" style="left:911px;top:469px;width:177px;height:1px;background:#a8a8a8;z-index:2;"></div>
<div class="b" style="left:1089px;top:469px;width:72px;height:1px;background:#ececec;z-index:2;"></div>
<div class="t" style="left:909.30px;width:176px;text-align:center;top:440.54px;font-size:12px;line-height:12px;font-weight:normal;color:#111;">ReH Spec.</div>
<div class="t" style="left:912.50px;width:176px;text-align:center;top:455.04px;font-size:12px;line-height:12px;font-weight:normal;color:#111;">[MPa]</div>
<div class="t" style="left:1087.50px;width:74px;text-align:center;top:447.24px;font-size:12px;line-height:12px;font-weight:normal;color:#111;">200</div>
<div class="b" style="left:911px;top:469px;width:177px;height:33px;background:#CFE0F4;"></div>
<div class="b" style="left:1088px;top:469px;width:74px;height:33px;background:#fff;border-left:1px solid #b0b0b0;border-right:1px solid #b8b8b8;"></div>
<div class="b" style="left:911px;top:502px;width:177px;height:1px;background:#a8a8a8;z-index:2;"></div>
<div class="b" style="left:1089px;top:502px;width:72px;height:1px;background:#ececec;z-index:2;"></div>
<div class="t" style="left:909.30px;width:176px;text-align:center;top:473.49px;font-size:12px;line-height:12px;font-weight:normal;color:#111;">Ey</div>
<div class="t" style="left:912.50px;width:176px;text-align:center;top:487.99px;font-size:12px;line-height:12px;font-weight:normal;color:#111;">[%]</div>
<div class="t" style="left:1087.50px;width:74px;text-align:center;top:480.19px;font-size:12px;line-height:12px;font-weight:normal;color:#111;">0.15</div>
<div class="b" style="left:911px;top:502px;width:177px;height:33px;background:#CFE0F4;"></div>
<div class="b" style="left:1088px;top:502px;width:74px;height:33px;background:#fff;border-left:1px solid #b0b0b0;border-right:1px solid #b8b8b8;"></div>
<div class="b" style="left:911px;top:535px;width:177px;height:1px;background:#a8a8a8;z-index:2;"></div>
<div class="b" style="left:1089px;top:535px;width:72px;height:1px;background:#ececec;z-index:2;"></div>
<div class="t" style="left:909.30px;width:176px;text-align:center;top:512.99px;font-size:12px;line-height:12px;font-weight:normal;color:#111;">Maximum force control step</div>
<div class="t" style="left:1087.50px;width:74px;text-align:center;top:512.99px;font-size:12px;line-height:12px;font-weight:normal;color:#111;">58</div>
<div class="b" style="left:911px;top:535px;width:177px;height:33px;background:#F0F0F0;"></div>
<div class="b" style="left:1088px;top:535px;width:74px;height:33px;background:#fff;border-left:1px solid #b0b0b0;border-right:1px solid #b8b8b8;"></div>
<div class="b" style="left:911px;top:568px;width:177px;height:1px;background:#a8a8a8;z-index:2;"></div>
<div class="b" style="left:1089px;top:568px;width:72px;height:1px;background:#ececec;z-index:2;"></div>
<div class="t" style="left:909.30px;width:176px;text-align:center;top:538.94px;font-size:12px;line-height:12px;font-weight:normal;color:#111;">Maximum force</div>
<div class="t" style="left:912.50px;width:176px;text-align:center;top:553.44px;font-size:12px;line-height:12px;font-weight:normal;color:#111;">[N]</div>
<div class="t" style="left:1087.50px;width:74px;text-align:center;top:545.64px;font-size:12px;line-height:12px;font-weight:normal;color:#111;">429032.7813</div>
<div class="b" style="left:911px;top:568px;width:177px;height:33px;background:#F0F0F0;"></div>
<div class="b" style="left:1088px;top:568px;width:74px;height:33px;background:#fff;border-left:1px solid #b0b0b0;border-right:1px solid #b8b8b8;"></div>
<div class="b" style="left:911px;top:601px;width:177px;height:1px;background:#a8a8a8;z-index:2;"></div>
<div class="b" style="left:1089px;top:601px;width:72px;height:1px;background:#ececec;z-index:2;"></div>
<div class="t" style="left:909.30px;width:176px;text-align:center;top:571.74px;font-size:12px;line-height:12px;font-weight:normal;color:#111;">Rm</div>
<div class="t" style="left:912.50px;width:176px;text-align:center;top:586.24px;font-size:12px;line-height:12px;font-weight:normal;color:#111;">[MPa]</div>
<div class="t" style="left:1087.50px;width:74px;text-align:center;top:578.44px;font-size:12px;line-height:12px;font-weight:normal;color:#111;">606.9572</div>
<div class="b" style="left:911px;top:601px;width:177px;height:32px;background:#F0F0F0;"></div>
<div class="b" style="left:1088px;top:601px;width:74px;height:32px;background:#fff;border-left:1px solid #b0b0b0;border-right:1px solid #b8b8b8;"></div>
<div class="b" style="left:911px;top:633px;width:177px;height:1px;background:#a8a8a8;z-index:2;"></div>
<div class="b" style="left:1089px;top:633px;width:72px;height:1px;background:#ececec;z-index:2;"></div>
<div class="t" style="left:909.30px;width:176px;text-align:center;top:604.54px;font-size:12px;line-height:12px;font-weight:normal;color:#111;">U20</div>
<div class="t" style="left:912.50px;width:176px;text-align:center;top:619.04px;font-size:12px;line-height:12px;font-weight:normal;color:#111;">[mm]</div>
<div class="t" style="left:1087.50px;width:74px;text-align:center;top:611.24px;font-size:12px;line-height:12px;font-weight:normal;color:#111;">-0.003</div>
<div class="b" style="left:911px;top:633px;width:177px;height:33px;background:#F0F0F0;"></div>
<div class="b" style="left:1088px;top:633px;width:74px;height:33px;background:#fff;border-left:1px solid #b0b0b0;border-right:1px solid #b8b8b8;"></div>
<div class="b" style="left:911px;top:666px;width:177px;height:1px;background:#a8a8a8;z-index:2;"></div>
<div class="b" style="left:1089px;top:666px;width:72px;height:1px;background:#ececec;z-index:2;"></div>
<div class="t" style="left:909.30px;width:176px;text-align:center;top:637.04px;font-size:12px;line-height:12px;font-weight:normal;color:#111;">Agt</div>
<div class="t" style="left:912.50px;width:176px;text-align:center;top:651.54px;font-size:12px;line-height:12px;font-weight:normal;color:#111;">[%]</div>
<div class="t" style="left:1087.50px;width:74px;text-align:center;top:643.74px;font-size:12px;line-height:12px;font-weight:normal;color:#111;">9.8868</div>
<div class="b" style="left:911px;top:665px;width:251px;height:1px;background:#a8a8a8;"></div>
<div class="b" style="left:0px;top:753px;width:1336px;height:6px;background:#B4B4B4;"></div>
<div class="b" style="left:0px;top:759px;width:1336px;height:99px;background:#B4B4B4;"></div>
<div class="b" style="left:-4px;top:759px;width:219px;height:99px;background:#4D7FB9;"></div>
<div class="t" style="left:-3.00px;top:768.19px;font-size:14.9px;line-height:14.9px;font-weight:normal;color:#e6edf7;">Load(100kN)</div>
<div class="t" style="left:-4.50px;width:220px;text-align:center;top:793.68px;font-size:37px;line-height:37px;font-weight:normal;color:#fff;">0.000</div>
<div class="t" style="left:55.50px;width:100px;text-align:center;top:842.69px;font-size:13.6px;line-height:13.6px;font-weight:bold;color:#fff;">N</div>
<svg width="1336" height="858"><g fill="none" stroke="#e4edf8" stroke-width="2"><path d="M195.29,765.01 A12,12 0 0 0 192.77,787.20"/><path d="M202.90,787.73 A12,12 0 0 0 204.03,766.00"/></g><path d="M200.00,788.80 L191.80,790.20 L194.80,783.50 Z" fill="#e4edf8"/><path d="M197.20,763.20 L205.00,762.20 L202.60,768.80 Z" fill="#e4edf8"/></svg>
<div class="b" style="left:221px;top:759px;width:219.5px;height:99px;background:#4D7FB9;"></div>
<div class="t" style="left:222.00px;top:768.19px;font-size:14.9px;line-height:14.9px;font-weight:normal;color:#e6edf7;">Position</div>
<div class="t" style="left:220.75px;width:220px;text-align:center;top:793.68px;font-size:37px;line-height:37px;font-weight:normal;color:#fff;">0.00000</div>
<div class="t" style="left:280.75px;width:100px;text-align:center;top:842.69px;font-size:13.6px;line-height:13.6px;font-weight:bold;color:#fff;">mm</div>
<svg width="1336" height="858"><g fill="none" stroke="#e4edf8" stroke-width="2"><path d="M420.79,765.01 A12,12 0 0 0 418.27,787.20"/><path d="M428.40,787.73 A12,12 0 0 0 429.53,766.00"/></g><path d="M425.50,788.80 L417.30,790.20 L420.30,783.50 Z" fill="#e4edf8"/><path d="M422.70,763.20 L430.50,762.20 L428.10,768.80 Z" fill="#e4edf8"/></svg>
<div class="b" style="left:445px;top:759px;width:219.5px;height:99px;background:#4D7FB9;"></div>
<div class="t" style="left:446.00px;top:768.19px;font-size:14.9px;line-height:14.9px;font-weight:normal;color:#e6edf7;">Extension(25mm)</div>
<div class="t" style="left:444.75px;width:220px;text-align:center;top:793.68px;font-size:37px;line-height:37px;font-weight:normal;color:#fff;">0.00015</div>
<div class="t" style="left:504.75px;width:100px;text-align:center;top:842.69px;font-size:13.6px;line-height:13.6px;font-weight:bold;color:#fff;">mm</div>
<svg width="1336" height="858"><g fill="none" stroke="#e4edf8" stroke-width="2"><path d="M644.79,765.01 A12,12 0 0 0 642.27,787.20"/><path d="M652.40,787.73 A12,12 0 0 0 653.53,766.00"/></g><path d="M649.50,788.80 L641.30,790.20 L644.30,783.50 Z" fill="#e4edf8"/><path d="M646.70,763.20 L654.50,762.20 L652.10,768.80 Z" fill="#e4edf8"/></svg>
<div class="b" style="left:669.5px;top:759px;width:220.5px;height:99px;background:#4D7FB9;"></div>
<div class="t" style="left:670.50px;top:768.19px;font-size:14.9px;line-height:14.9px;font-weight:normal;color:#e6edf7;">Max Load</div>
<div class="t" style="left:669.75px;width:220px;text-align:center;top:793.68px;font-size:37px;line-height:37px;font-weight:normal;color:#fff;">0.000</div>
<div class="t" style="left:729.75px;width:100px;text-align:center;top:842.69px;font-size:13.6px;line-height:13.6px;font-weight:bold;color:#fff;">N</div>
<svg width="1336" height="858"><g fill="none" stroke="#e4edf8" stroke-width="2"><path d="M870.29,765.01 A12,12 0 0 0 867.77,787.20"/><path d="M877.90,787.73 A12,12 0 0 0 879.03,766.00"/></g><path d="M875.00,788.80 L866.80,790.20 L869.80,783.50 Z" fill="#e4edf8"/><path d="M872.20,763.20 L880.00,762.20 L877.60,768.80 Z" fill="#e4edf8"/></svg>
<div class="b" style="left:895px;top:759px;width:220px;height:99px;background:#4D7FB9;"></div>
<div class="t" style="left:896.00px;top:768.19px;font-size:14.9px;line-height:14.9px;font-weight:normal;color:#e6edf7;">Strain</div>
<div class="t" style="left:905.00px;width:200px;text-align:center;top:793.10px;font-size:36.5px;line-height:36.5px;font-weight:normal;color:#fff;">*****</div>
<div class="t" style="left:955.00px;width:100px;text-align:center;top:842.69px;font-size:13.6px;line-height:13.6px;font-weight:bold;color:#fff;">mm/mm</div>
<svg width="1336" height="858"><g fill="none" stroke="#e4edf8" stroke-width="2"><path d="M1095.29,765.01 A12,12 0 0 0 1092.77,787.20"/><path d="M1102.90,787.73 A12,12 0 0 0 1104.03,766.00"/></g><path d="M1100.00,788.80 L1091.80,790.20 L1094.80,783.50 Z" fill="#e4edf8"/><path d="M1097.20,763.20 L1105.00,762.20 L1102.60,768.80 Z" fill="#e4edf8"/></svg>
<div class="b" style="left:1119px;top:759px;width:221px;height:99px;background:#4D7FB9;"></div>
<div class="t" style="left:1120.00px;top:768.19px;font-size:14.9px;line-height:14.9px;font-weight:normal;color:#e6edf7;">Max Load</div>
<div class="t" style="left:1119.50px;width:220px;text-align:center;top:793.68px;font-size:37px;line-height:37px;font-weight:normal;color:#fff;">0.000</div>
<div class="t" style="left:1179.50px;width:100px;text-align:center;top:842.69px;font-size:13.6px;line-height:13.6px;font-weight:bold;color:#fff;">N</div>
<svg width="1336" height="858"><g fill="none" stroke="#e4edf8" stroke-width="2"><path d="M1320.29,765.01 A12,12 0 0 0 1317.77,787.20"/><path d="M1327.90,787.73 A12,12 0 0 0 1329.03,766.00"/></g><path d="M1325.00,788.80 L1316.80,790.20 L1319.80,783.50 Z" fill="#e4edf8"/><path d="M1322.20,763.20 L1330.00,762.20 L1327.60,768.80 Z" fill="#e4edf8"/></svg>
</body></html>
